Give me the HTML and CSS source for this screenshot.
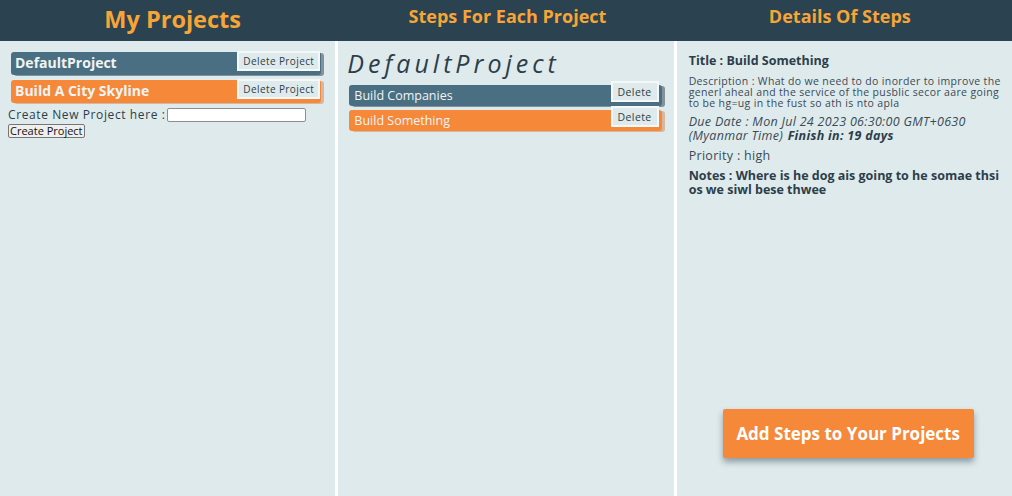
FILE: index.html
```html
<!DOCTYPE html>
<html>
<head>
<meta charset="utf-8">
<link rel="stylesheet" href="styles.css">
</head>
<body>
<div class="app">
  <section class="col col-projects">
    <header class="col-head"><h1 class="head-big">My Projects</h1></header>
    <div class="col-body projects-body">
      <div class="bar bar-blue project-bar">
        <span class="project-name">DefaultProject</span>
        <button class="del-btn">Delete Project</button>
      </div>
      <div class="bar bar-orange project-bar">
        <span class="project-name">Build A City Skyline</span>
        <button class="del-btn">Delete Project</button>
      </div>
      <div class="create-row">
        <label class="create-label">Create New Project here :</label><input class="create-input" type="text">
      </div>
      <button class="create-btn">Create Project</button>
    </div>
  </section>
  <section class="col col-steps">
    <header class="col-head"><h2 class="head-small">Steps For Each Project</h2></header>
    <div class="col-body steps-body">
      <h3 class="steps-title">DefaultProject</h3>
      <div class="bar bar-blue step-bar">
        <span class="step-name">Build Companies</span>
        <button class="del-btn step-del">Delete</button>
      </div>
      <div class="bar bar-orange step-bar">
        <span class="step-name">Build Something</span>
        <button class="del-btn step-del">Delete</button>
      </div>
    </div>
  </section>
  <section class="col col-details">
    <header class="col-head"><h2 class="head-small">Details Of Steps</h2></header>
    <div class="col-body details-body">
      <p class="d-title">Title : Build Something</p>
      <p class="d-desc">Description : What do we need to do inorder to improve the generl aheal and the service of the pusblic secor aare going to be hg=ug in the fust so ath is nto apla</p>
      <p class="d-due">Due Date : Mon Jul 24 2023 06:30:00 GMT+0630 (Myanmar Time) <b class="d-finish">Finish in: 19 days</b></p>
      <p class="d-prio">Priority : high</p>
      <p class="d-notes">Notes : Where is he dog ais going to he somae thsi os we siwl bese thwee</p>
      <button class="add-btn">Add Steps to Your Projects</button>
    </div>
  </section>
</div>
</body>
</html>
```

FILE: styles.css
```css
* { box-sizing: border-box; }
html, body { margin: 0; padding: 0; }
body {
  background: #ffffff;
  font-family: "Open Sans", "DejaVu Sans", sans-serif;
  color: #2c3e4a;
}
.app {
  display: grid;
  grid-template-columns: 1fr 1fr 1fr;
  column-gap: 3px;
  height: 496px;
}
.col {
  display: flex;
  flex-direction: column;
  background: #dfeaec;
}
.col-head {
  height: 41px;
  background: #2b4251;
  display: flex;
  align-items: center;
  justify-content: center;
  margin-right: -3px;
}
.col-projects .col-head { padding-left: 7px; }
.col-details .col-head { margin-right: 0; padding-right: 9px; }
.head-big, .head-small {
  margin: 0;
  color: #f6a536;
  font-weight: 700;
  line-height: 1;
}
.head-big { font-size: 23.5px; padding-bottom: 1px; }
.head-small { font-size: 18px; padding-bottom: 10px; }
.col-body { flex: 1; display: flex; flex-direction: column; }

.bar {
  display: flex;
  justify-content: space-between;
  align-items: flex-start;
  border-radius: 3px;
  box-shadow: 3px 1px 0 rgba(20, 40, 55, 0.45);
  color: #f0f4f5;
}
.bar-blue { background: #4b6f82; }
.bar-orange { background: #f6883a; box-shadow: 3px 1px 0 rgba(200, 90, 20, 0.35); }

.projects-body { padding: 11px 0 0 8px; }
.project-bar {
  margin: 0 14px 5px 3px;
  height: 23px;
}
.project-name {
  font-size: 14px;
  font-weight: 700;
  padding: 2px 0 0 4px;
  line-height: 18px;
}
.del-btn {
  font-family: inherit;
  font-size: 10px;
  letter-spacing: 0.4px;
  color: #2c3e4a;
  background: #dfeaec;
  border: 2px solid #f4f8f9;
  height: 20px;
  padding: 0 4px;
  margin: -1px 1px 0 0;
  cursor: pointer;
}
.create-row { display: flex; align-items: center; margin-top: 0px; }
.create-label { font-size: 12px; letter-spacing: 0.6px; line-height: 14px; }
.create-input {
  width: 139px;
  height: 14px;
  border: 1px solid #8a8f93;
  border-radius: 2px;
  background: #fff;
  margin: 0 0 0 2px;
  padding: 0;
}
.create-btn {
  align-self: flex-start;
  margin-top: 2px;
  font-family: inherit;
  font-size: 11px;
  height: 14px;
  line-height: 10px;
  padding: 0 1px;
  border: 1px solid #767676;
  border-radius: 2px;
  background: #efefef;
  color: #111;
}

.steps-body { padding: 9px 12px 0 11px; }
.steps-title {
  margin: 0 0 9px -2px;
  font-size: 25px;
  font-style: italic;
  font-weight: 500;
  letter-spacing: 4px;
  color: #2c3e4a;
  line-height: 26px;
}
.step-bar {
  height: 21px;
  margin-bottom: 4px;
  overflow: visible;
}
.step-name { font-size: 12.5px; padding: 3px 0 0 5px; line-height: 16px; }
.step-del { margin: -4px 3px 0 0; height: 21px; padding: 0 5px; font-size: 10.5px; }

.details-body { padding: 12px 11px 0 12px; }
.details-body p { margin: 0; }
.d-title { font-size: 12.5px; font-weight: 700; line-height: 16px; }
.d-desc { font-size: 10.5px; letter-spacing: 0.35px; line-height: 11px; margin-top: 7px !important; color: #3a4b56; }
.d-due { font-size: 12.5px; font-style: italic; line-height: 14px; margin-top: 6px !important; letter-spacing: 0.3px; color: #3a4b56; }
.d-prio { font-size: 12.5px; line-height: 14px; margin-top: 6px !important; letter-spacing: 0.3px; color: #3a4b56; }
.d-finish { color: #2c3e4a; margin-left: 1px; }
.d-notes { font-size: 12.5px; font-weight: 700; line-height: 14px; margin-top: 6px !important; letter-spacing: 0; }
.add-btn {
  margin: auto 0 38px 34px;
  align-self: flex-start;
  width: 251px;
  height: 49px;
  background: #f6883a;
  color: #ffffff;
  border: 0;
  border-radius: 2px;
  font-family: inherit;
  font-size: 17px;
  font-weight: 700;
  box-shadow: 0 4px 6px rgba(40, 60, 75, 0.45);
  cursor: pointer;
}
```
